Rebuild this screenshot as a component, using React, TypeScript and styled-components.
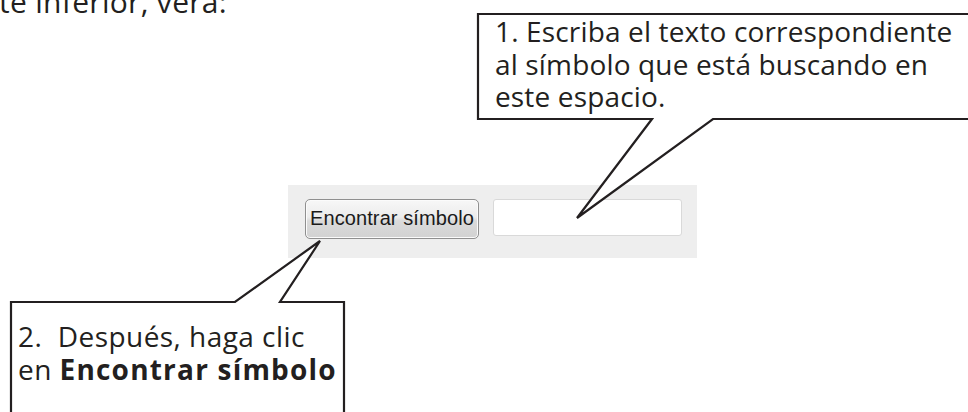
import React from "react";
import styled, { createGlobalStyle } from "styled-components";

const Global = createGlobalStyle`
  html, body { margin: 0; padding: 0; background: #ffffff; }
  body { overflow: hidden; }
`;

const Page = styled.div`
  position: relative;
  width: 968px;
  height: 412px;
  overflow: hidden;
  background: #ffffff;
  font-family: "Open Sans", "Noto Sans", sans-serif;
  color: #231f20;
`;

const Intro = styled.p`
  margin: -15px 0 0 -1px;
  font-size: 30px;
  line-height: 33px;
  letter-spacing: 0.3px;
  white-space: nowrap;
`;

const Panel = styled.div`
  margin: 167px 0 0 288px;
  width: 409px;
  height: 73px;
  box-sizing: border-box;
  background: #eeeeee;
  display: flex;
  align-items: flex-start;
  gap: 14px;
  padding: 14px 0 0 17px;
`;

const FindButton = styled.button`
  width: 174px;
  height: 40px;
  box-sizing: border-box;
  border: 1px solid #8f8f8f;
  border-radius: 5px;
  background: linear-gradient(#f7f7f7 0%, #ececec 45%, #dadada 55%, #d2d2d2 100%);
  box-shadow: inset 0 0 0 1px #fbfbfb;
  font-family: "Liberation Sans", Arial, sans-serif;
  font-size: 20px;
  letter-spacing: 0.1px;
  color: #1a1a1a;
  padding: 0 0 2px 0;
  display: flex;
  align-items: center;
  justify-content: center;
`;

const SearchInput = styled.div`
  width: 189px;
  height: 37px;
  box-sizing: border-box;
  background: #ffffff;
  border: 1px solid #d9d9d9;
  border-radius: 3px;
`;

const Callout = styled.div<{ $left: number; $top: number; $w: number; $h: number }>`
  position: absolute;
  left: ${(p) => p.$left}px;
  top: ${(p) => p.$top}px;
  width: ${(p) => p.$w}px;
  height: ${(p) => p.$h}px;
`;

const Outline = styled.svg`
  position: absolute;
  left: 0;
  top: 0;
  overflow: visible;
`;

const CalloutText = styled.div<{ $pl: number; $pt: number; $ls: number }>`
  position: relative;
  padding: ${(p) => p.$pt}px 0 0 ${(p) => p.$pl}px;
  font-size: 28px;
  line-height: 32.5px;
  letter-spacing: ${(p) => p.$ls}px;
  white-space: pre;
  color: #231f20;
`;

const Strong = styled.b`
  font-weight: 700;
  letter-spacing: 1.2px;
`;

export default function App() {
  return (
    <Page>
      <Global />
      <Intro>te inferior, verá:</Intro>
      <Panel>
        <FindButton>Encontrar símbolo</FindButton>
        <SearchInput />
      </Panel>

      <Callout $left={477} $top={13} $w={491} $h={206}>
        <Outline width="491" height="206" viewBox="0 0 491 206">
          <path
            d="M 560 1 L 1 1 L 1 106 L 175 106 L 100 205 L 236 106 L 560 106"
            fill="#ffffff"
            stroke="#231f20"
            strokeWidth="2.2"
            strokeLinejoin="miter"
          />
        </Outline>
        <CalloutText $pl={18} $pt={2} $ls={0.15}>
          {"1. Escriba el texto correspondiente\nal símbolo que está buscando en\neste espacio."}
        </CalloutText>
      </Callout>

      <Callout $left={10} $top={240} $w={335} $h={172}>
        <Outline width="335" height="172" viewBox="0 0 335 172">
          <path
            d="M 1 240 L 1 62 L 225 62 L 310 1 L 270 62 L 334 62 L 334 240"
            fill="#ffffff"
            stroke="#231f20"
            strokeWidth="2.2"
          />
        </Outline>
        <CalloutText $pl={8} $pt={80} $ls={0.45}>
          {"2.  Después, haga clic\nen "}
          <Strong>Encontrar símbolo</Strong>
        </CalloutText>
      </Callout>
    </Page>
  );
}
